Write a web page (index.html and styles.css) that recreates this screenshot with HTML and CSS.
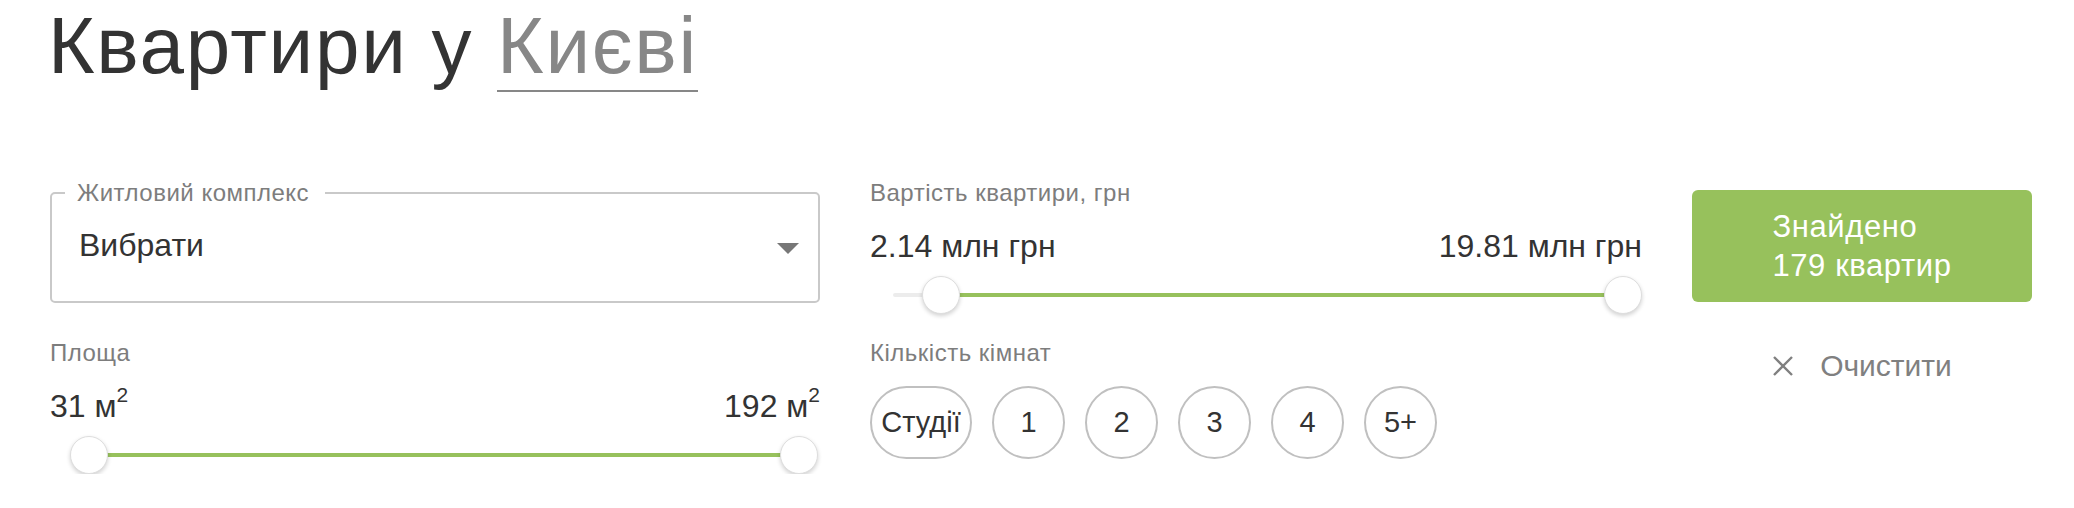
FILE: index.html
```html
<!DOCTYPE html>
<html lang="uk">
<head>
<meta charset="utf-8">
<title>Квартири у Києві</title>
<link rel="stylesheet" href="styles.css">
</head>
<body>
<div class="page">
  <h1 class="title">Квартири у <span class="city">Києві</span></h1>
  <div class="filters">
    <fieldset class="select">
      <legend>Житловий комплекс</legend>
      <div class="select-value"><span>Вибрати</span><span class="caret"></span></div>
    </fieldset>

    <div class="range price">
      <div class="label">Вартість квартири, грн</div>
      <div class="range-values"><span>2.14 млн грн</span><span>19.81 млн грн</span></div>
      <div class="slider">
        <div class="track"></div>
        <div class="fill" style="left:calc((100% - 38px) * 0.041 + 19px); right:19px"></div>
        <div class="thumb" style="left:calc((100% - 38px) * 0.041)"></div>
        <div class="thumb" style="left:calc((100% - 38px) * 1)"></div>
      </div>
    </div>

    <button class="found" type="button"><span class="found-text">Знайдено<br>179 квартир</span></button>

    <div class="range area">
      <div class="label">Площа</div>
      <div class="range-values"><span>31 м<sup>2</sup></span><span>192 м<sup>2</sup></span></div>
      <div class="slider">
        <div class="track"></div>
        <div class="fill" style="left:19px; right:19px"></div>
        <div class="thumb" style="left:calc((100% - 38px) * 0)"></div>
        <div class="thumb" style="left:calc((100% - 38px) * 1)"></div>
      </div>
    </div>

    <div class="rooms">
      <div class="label">Кількість кімнат</div>
      <div class="room-list">
        <button class="room studio" type="button">Студії</button>
        <button class="room" type="button">1</button>
        <button class="room" type="button">2</button>
        <button class="room" type="button">3</button>
        <button class="room" type="button">4</button>
        <button class="room" type="button">5+</button>
      </div>
    </div>

    <button class="clear" type="button">
      <svg class="clear-icon" width="22" height="22" viewBox="0 0 22 22"><path d="M2 2 L20 20 M20 2 L2 20" stroke="#808080" stroke-width="2.4" fill="none"/></svg>
      <span>Очистити</span>
    </button>
  </div>
</div>
</body>
</html>
```

FILE: styles.css
```css
* { box-sizing: border-box; }

html, body {
  margin: 0;
  padding: 0;
  background: #fff;
}

body {
  font-family: "Liberation Sans", Arial, Helvetica, sans-serif;
  color: #333;
}

.page {
  padding: 0 0 0 50px;
  width: 2074px;
}

.title {
  margin: 0 0 0 -2px;
  font-size: 80px;
  font-weight: 400;
  line-height: normal;
  letter-spacing: 1.7px;
  color: #333;
}

.city {
  color: #878787;
  border-bottom: 2px solid #878787;
}

.filters {
  margin-top: 88px;
  display: grid;
  grid-template-columns: 770px 772px 340px;
  column-gap: 50px;
  row-gap: 26px;
  align-items: start;
}

/* select */
.select {
  margin: 0;
  padding: 0;
  border: 2px solid #c9c9c9;
  border-radius: 5px;
  min-width: 0;
}

.select legend {
  margin-left: 13px;
  padding: 0 16px 0 12px;
  font-size: 24px;
  line-height: 26px;
  letter-spacing: 0.5px;
  color: #7d7d7d;
}

.select-value {
  display: flex;
  justify-content: space-between;
  align-items: center;
  padding: 21px 19px 38px 27px;
  font-size: 32px;
  line-height: 36px;
  color: #333;
}

.caret {
  width: 0;
  height: 0;
  border-left: 11px solid transparent;
  border-right: 11px solid transparent;
  border-top: 11px solid #777;
  margin-top: 6px;
}

/* range */
.label {
  font-size: 24px;
  line-height: 26px;
  letter-spacing: 0.5px;
  color: #7d7d7d;
}

.range-values {
  margin-top: 22px;
  display: flex;
  justify-content: space-between;
  font-size: 32px;
  line-height: 36px;
  color: #333;
}

.range-values sup {
  font-size: 21px;
  line-height: 0;
  vertical-align: 0;
  position: relative;
  top: -15px;
}

.slider {
  position: relative;
  height: 38px;
  margin-top: 12px;
  padding-top: 17px;
}

.price .slider { margin-left: 23px; }
.area .slider { margin-left: 20px; margin-right: 2px; }

.track {
  height: 4px;
  background: #ececec;
  border-radius: 2px;
}

.fill {
  position: absolute;
  top: 17px;
  height: 4px;
  background: #97c15c;
}

.thumb {
  position: absolute;
  top: 0;
  width: 38px;
  height: 38px;
  border-radius: 50%;
  background: #fff;
  border: 1px solid #dedede;
  box-shadow: 0 2px 4px rgba(0, 0, 0, 0.18);
}

/* found button */
.found {
  margin-top: 10px;
  height: 112px;
  border: 0;
  border-radius: 6px;
  background: #97c15c;
  color: #fff;
  font-family: "Liberation Sans", Arial, Helvetica, sans-serif;
  font-size: 31px;
  line-height: 39px;
  letter-spacing: 0.6px;
  display: flex;
  align-items: center;
  justify-content: center;
  padding: 0;
  cursor: pointer;
}

.found-text {
  text-align: left;
  display: inline-block;
}

/* rooms */
.room-list {
  margin-top: 20px;
  display: flex;
  gap: 20px;
}

.room {
  width: 73px;
  height: 73px;
  border-radius: 37px;
  border: 2px solid #c0c0c0;
  background: #fff;
  color: #333;
  font-family: "Liberation Sans", Arial, Helvetica, sans-serif;
  font-size: 29px;
  padding: 0;
  display: flex;
  align-items: center;
  justify-content: center;
  cursor: pointer;
}

.room.studio {
  width: 102px;
}

/* clear */
.clear {
  justify-self: center;
  margin-top: 6px;
  border: 0;
  background: transparent;
  display: flex;
  align-items: center;
  gap: 26px;
  padding: 0;
  font-family: "Liberation Sans", Arial, Helvetica, sans-serif;
  font-size: 30px;
  line-height: 40px;
  color: #808080;
  cursor: pointer;
}

.clear-icon {
  display: block;
}
```
